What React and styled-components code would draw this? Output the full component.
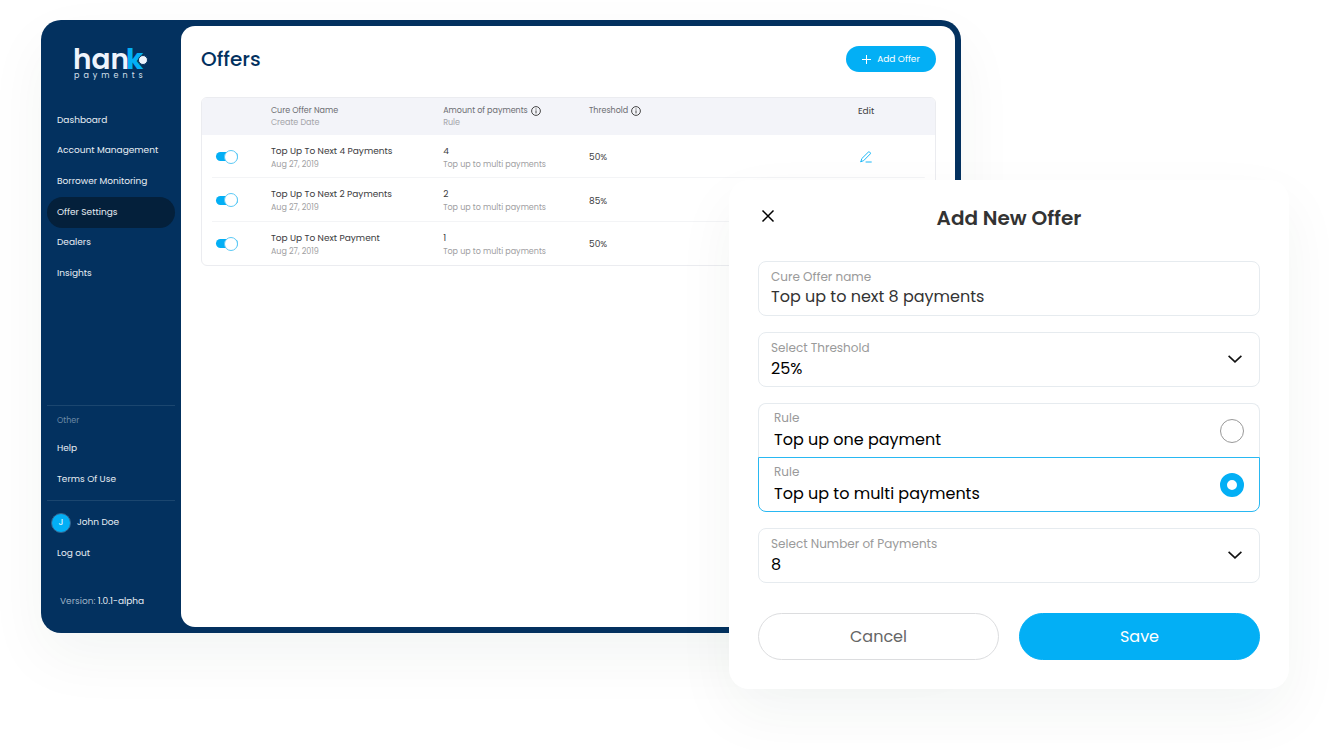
import React, { useState } from 'react';
import styled, { createGlobalStyle } from 'styled-components';

const GlobalStyle = createGlobalStyle`
*{
  box-sizing:border-box;
}
body{
  margin:0;
  background:#fff;
}
body, button, input, select{
  font-family:Poppins, Inter, "Liberation Sans", sans-serif;
}
`

const Page = styled.div`
position:relative;
min-height:100vh;
padding:20px 40px 60px 41px;
`

const Window = styled.div`
display:flex;
width:calc(100% - 328px);
min-height:calc(100vh - 137px);
padding:6px 6px 6px 0;
background:#03315f;
border-radius:20px;
box-shadow:0 24px 60px rgba(10,50,40,0.05);
`

const Sidebar = styled.aside`
display:flex;
flex-direction:column;
flex:none;
width:140px;
padding:18px 6px 17px;
`

const Logo = styled.a`
display:block;
height:40px;
margin:0 0 21px 27px;
  & > svg{
    display:block;
    overflow:visible;
  }
`

const Nav = styled.nav`
display:grid;
grid-auto-rows:1fr;
min-height:${props => props.$height};
`

const NavLink = styled.a`
display:flex;
align-items:center;
gap:6px;
padding-left:${props => props.$user ? '4px' : '10px'};
border-radius:16px;
color:#e8eef4;
font-size:9px;
text-decoration:none;
white-space:nowrap;
background:${props => props.$active ? '#04203b' : 'transparent'};
`

const Bottom = styled.div`
margin-top:auto;
`

const Divider = styled.hr`
height:1px;
margin:${props => props.$spaced ? '5px' : '0'} 0 6px;
border:0;
background:#1b466f;
`

const GroupLabel = styled.div`
padding-left:10px;
margin-bottom:3px;
color:#6c89a5;
font-size:8px;
line-height:18px;
`

const Avatar = styled.span`
display:flex;
align-items:center;
justify-content:center;
width:20px;
height:20px;
border:1px solid #36618a;
border-radius:50%;
background:#03aff5;
color:#fff;
font-size:9px;
`

const Version = styled.div`
margin:23px 0 0 13px;
color:#9fb3c6;
font-size:9px;
line-height:18px;
white-space:nowrap;
  & > span{
    color:#e8eef4;
  }
`

const Main = styled.main`
flex:1;
min-width:0;
padding:20px 19px 20px 20px;
border-radius:14px;
background:#fff;
`

const MainHeader = styled.header`
display:flex;
align-items:center;
justify-content:space-between;
margin-bottom:25px;
  & > h1{
    margin:0;
    color:#03315f;
    font-size:20px;
    font-weight:500;
    line-height:26px;
  }
`

const AddButton = styled.button`
display:flex;
align-items:center;
justify-content:center;
gap:6px;
width:90px;
height:26px;
padding:0;
border:0;
border-radius:13px;
background:#03aff5;
color:#fff;
font-size:9px;
`

const TableBox = styled.div`
overflow:hidden;
border:1px solid #ebecf0;
border-radius:6px;
`

const Table = styled.table`
width:100%;
table-layout:fixed;
border-collapse:collapse;
text-align:left;
  & th, & td{
    padding:0;
    font-weight:400;
  }
`

const HeadRow = styled.tr`
height:37px;
background:#f3f4f9;
color:#6c6d72;
font-size:8px;
line-height:12px;
  & > th{
    vertical-align:top;
    padding-top:7px;
  }
  & small{
    display:block;
    color:#a3a4a9;
    font-size:8px;
  }
`

const HeadLabel = styled.span`
display:flex;
align-items:center;
gap:3px;
height:12px;
`

const EditHead = styled.th`
color:#3e3f43;
font-size:9px;
text-align:center;
`

const Row = styled.tr`
height:43px;
background:linear-gradient(#f3f4f6, #f3f4f6) center bottom / calc(100% - 20px) 1px no-repeat;
  &:nth-child(even){
    height:44px;
  }
  &:last-child{
    background:none;
  }
`

const Cell = styled.td`
  && {
    padding-top:2px;
  }
color:#3c3c3e;
font-size:9px;
line-height:13px;
  & > small{
    display:block;
    color:#a0a0a2;
    font-size:8px;
    line-height:13px;
  }
`

const ToggleCell = styled.td`
  && {
    padding-left:14px;
  }
`

const Toggle = styled.input`
appearance:none;
display:flex;
align-items:center;
width:22px;
height:9px;
margin:0;
border-radius:5px;
background:${props => props.checked ? '#03aff5' : '#c9ccd2'};
cursor:pointer;
  &::after{
    content:"";
    flex:none;
    width:12px;
    height:12px;
    margin-left:${props => props.checked ? 'auto' : '0'};
    border:1px solid ${props => props.checked ? '#5cc9f5' : '#c9ccd2'};
    border-radius:50%;
    background:#fff;
  }
`

const IconButton = styled.button`
display:block;
padding:0;
border:0;
background:none;
color:${props => props.$color || '#000'};
margin:${props => props.$center ? '0 auto' : '0'};
  & > svg{
    display:block;
  }
`

const Dialog = styled.section`
position:absolute;
top:180px;
right:40px;
width:560px;
max-width:calc(100% - 80px);
padding:25px 29px 29px;
border-radius:20px;
background:#fff;
box-shadow:0 24px 60px rgba(10,50,40,0.05);
`

const DialogHeader = styled.header`
display:grid;
grid-template-columns:20px 1fr 20px;
align-items:center;
height:26px;
margin-bottom:30px;
  & > h2{
    margin:0;
    color:#333;
    font-size:20px;
    font-weight:600;
    line-height:26px;
    text-align:center;
  }
`

const Form = styled.form`
display:flex;
flex-direction:column;
gap:16px;
`

const Field = styled.label`
display:grid;
grid-template-columns:1fr auto;
align-items:center;
height:55px;
padding:0 17px 2px 12px;
border:1px solid #e6ebef;
border-radius:8px;
`

const FieldText = styled.span`
display:flex;
flex-direction:column;
gap:1px;
min-width:0;
padding-bottom:1px;
`

const FieldName = styled.span`
color:#9a9a9a;
font-size:12px;
line-height:17px;
`

const TextInput = styled.input`
width:100%;
height:20px;
padding:0;
border:0;
outline:0;
background:none;
color:#333;
font-size:16px;
`

const Select = styled.select`
appearance:none;
width:100%;
height:20px;
padding:0;
border:0;
outline:0;
background:none;
color:#000;
font-size:16px;
`

const RuleGroup = styled.div`
display:flex;
flex-direction:column;
`

const RuleOption = styled(Field)`
padding:0 15px;
border-color:${props => props.$checked ? '#29b8f2' : '#e6ebef'};
border-radius:0;
  &:first-child{
    height:54px;
    border-radius:8px 8px 0 0;
    border-bottom-width:${props => props.$checked ? '1px' : '0'};
  }
  &:last-child{
    border-radius:0 0 8px 8px;
  }
`

const RuleText = styled(FieldText)`
gap:5px;
padding-bottom:4px;
color:#000;
font-size:16px;
line-height:18px;
`

const Radio = styled.input`
appearance:none;
width:24px;
height:24px;
margin:0;
border:1px solid #999;
border-radius:50%;
background:#fff;
  &:checked{
    border:7px solid #03aff5;
  }
`

const Actions = styled.div`
display:grid;
grid-template-columns:1fr 1fr;
gap:20px;
margin-top:14px;
`

const ActionButton = styled.button`
height:47px;
border:1px solid ${props => props.$primary ? '#03aff5' : '#dcdddf'};
border-radius:24px;
background:${props => props.$primary ? '#03aff5' : '#fff'};
color:${props => props.$primary ? '#fff' : '#666'};
font-size:16px;
`

const HankLogo = () => (
  <svg width="76" height="38" viewBox="0 0 76 38" aria-label="hank payments">
    <text x="-1" y="25" fontSize="28" fontWeight="600" fill="#eef4fc">han</text>
    <text x="52" y="25" fontSize="28" fontWeight="700" fill="#03aff5">k</text>
    <circle cx="69" cy="16" r="4.5" fill="#eef4fc" stroke="#03315f" strokeWidth="1" />
    <text x="0" y="34" fontSize="8" letterSpacing="4" fill="#d5e0ec">payments</text>
  </svg>
)

const InfoIcon = () => (
  <svg width="10" height="10" viewBox="0 0 10 10" fill="none" stroke="#333" strokeWidth="0.9">
    <circle cx="5" cy="5" r="4.4" />
    <path d="M5 4.4v3M5 2.5v1" />
  </svg>
)

const PlusIcon = () => (
  <svg width="9" height="9" viewBox="0 0 9 9" stroke="#fff" strokeWidth="1">
    <path d="M4.5 0v9M0 4.5h9" />
  </svg>
)

const PencilIcon = () => (
  <svg width="12" height="12" viewBox="0 0 12 12" fill="none" stroke="currentColor" strokeWidth="0.9" strokeLinejoin="round" strokeLinecap="round">
    <path d="M1 10.6l.7-2.9L8.3 1.1a1 1 0 0 1 1.4 0l.5.5a1 1 0 0 1 0 1.4L3.6 9.7 1 10.6zM6 11h5.3" />
  </svg>
)

const CloseIcon = () => (
  <svg width="20" height="20" viewBox="0 0 20 20" stroke="currentColor" strokeWidth="1.5">
    <path d="M4.5 2.5l11 11M15.5 2.5l-11 11" />
  </svg>
)

const ChevronIcon = () => (
  <svg width="14" height="8" viewBox="0 0 14 8" fill="none" stroke="#111" strokeWidth="1.6">
    <path d="M.6.8L7 6.8 13.4.8" />
  </svg>
)

const pages = ['Dashboard', 'Account Management', 'Borrower Monitoring', 'Offer Settings', 'Dealers', 'Insights'];

const initialOffers = [
  { name: 'Top Up To Next 4 Payments', date: 'Aug 27, 2019', amount: 4, threshold: '50%', on: true },
  { name: 'Top Up To Next 2 Payments', date: 'Aug 27, 2019', amount: 2, threshold: '85%', on: true },
  { name: 'Top Up To Next Payment', date: 'Aug 27, 2019', amount: 1, threshold: '50%', on: true },
];

const rules = ['Top up one payment', 'Top up to multi payments'];

function Menu() {
  return (
    <Sidebar>
      <Logo href="#"><HankLogo /></Logo>
      <Nav $height="184px">
        {pages.map(page => (
          <NavLink key={page} href="#" $active={page === 'Offer Settings'}>{page}</NavLink>
        ))}
      </Nav>
      <Bottom>
        <Divider />
        <GroupLabel>Other</GroupLabel>
        <Nav $height="62px">
          <NavLink href="#">Help</NavLink>
          <NavLink href="#">Terms Of Use</NavLink>
        </Nav>
        <Divider $spaced />
        <Nav $height="62px">
          <NavLink href="#" $user><Avatar>J</Avatar>John Doe</NavLink>
          <NavLink href="#">Log out</NavLink>
        </Nav>
        <Version>Version: <span>1.0.1-alpha</span></Version>
      </Bottom>
    </Sidebar>
  )
}

function Offers() {
  const [offers, setOffers] = useState(initialOffers);
  const toggle = index => setOffers(offers.map((o, i) => i === index ? { ...o, on: !o.on } : o));

  return (
    <Main>
      <MainHeader>
        <h1>Offers</h1>
        <AddButton type="button"><PlusIcon />Add Offer</AddButton>
      </MainHeader>
      <TableBox>
        <Table>
          <colgroup>
            <col width="9.4%" />
            <col width="23.5%" />
            <col width="19.9%" />
            <col />
            <col width="18.8%" />
          </colgroup>
          <thead>
            <HeadRow>
              <th></th>
              <th><HeadLabel>Cure Offer Name</HeadLabel><small>Create Date</small></th>
              <th><HeadLabel>Amount of payments <InfoIcon /></HeadLabel><small>Rule</small></th>
              <th><HeadLabel>Threshold <InfoIcon /></HeadLabel></th>
              <EditHead>Edit</EditHead>
            </HeadRow>
          </thead>
          <tbody>
            {offers.map((offer, i) => (
              <Row key={offer.name}>
                <ToggleCell>
                  <Toggle type="checkbox" aria-label={offer.name} checked={offer.on} onChange={() => toggle(i)} />
                </ToggleCell>
                <Cell>{offer.name}<small>{offer.date}</small></Cell>
                <Cell>{offer.amount}<small>Top up to multi payments</small></Cell>
                <Cell>{offer.threshold}</Cell>
                <td>
                  <IconButton type="button" aria-label="Edit" $color="#03aff5" $center><PencilIcon /></IconButton>
                </td>
              </Row>
            ))}
          </tbody>
        </Table>
      </TableBox>
    </Main>
  )
}

function SelectField({ name, options, initial }) {
  const [value, setValue] = useState(initial);
  return (
    <Field>
      <FieldText>
        <FieldName>{name}</FieldName>
        <Select value={value} onChange={e => setValue(e.target.value)}>
          {options.map(o => <option key={o}>{o}</option>)}
        </Select>
      </FieldText>
      <ChevronIcon />
    </Field>
  )
}

function NewOffer() {
  const [name, setName] = useState('Top up to next 8 payments');
  const [rule, setRule] = useState(rules[1]);

  return (
    <Dialog role="dialog" aria-labelledby="new-offer">
      <DialogHeader>
        <IconButton type="button" aria-label="Close"><CloseIcon /></IconButton>
        <h2 id="new-offer">Add New Offer</h2>
      </DialogHeader>
      <Form onSubmit={e => e.preventDefault()}>
        <Field>
          <FieldText>
            <FieldName>Cure Offer name</FieldName>
            <TextInput value={name} onChange={e => setName(e.target.value)} />
          </FieldText>
        </Field>
        <SelectField name="Select Threshold" options={['25%', '50%', '85%']} initial="25%" />
        <RuleGroup>
          {rules.map(r => (
            <RuleOption key={r} $checked={rule === r}>
              <RuleText>
                <FieldName>Rule</FieldName>
                {r}
              </RuleText>
              <Radio type="radio" name="rule" checked={rule === r} onChange={() => setRule(r)} />
            </RuleOption>
          ))}
        </RuleGroup>
        <SelectField name="Select Number of Payments" options={['1', '2', '4', '8']} initial="8" />
        <Actions>
          <ActionButton type="button">Cancel</ActionButton>
          <ActionButton type="submit" $primary>Save</ActionButton>
        </Actions>
      </Form>
    </Dialog>
  )
}

export default function App() {
  return (
    <Page>
      <GlobalStyle />
      <Window>
        <Menu />
        <Offers />
      </Window>
      <NewOffer />
    </Page>
  )
}
